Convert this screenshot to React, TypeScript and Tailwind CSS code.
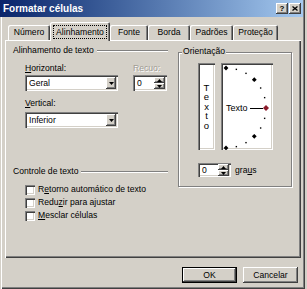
import React from "react";

const sunken =
  "shadow-[inset_1px_1px_0_#808080,inset_2px_2px_0_#404040,inset_-1px_-1px_0_#ffffff,inset_-2px_-2px_0_#d4d0c8]";
const raised =
  "shadow-[inset_-1px_-1px_0_#404040,inset_1px_1px_0_#ffffff,inset_-2px_-2px_0_#808080]";

function Down() {
  return (
    <svg width="5" height="3" viewBox="0 0 5 3">
      <path d="M0 0H5L2.5 3Z" fill="#000" />
    </svg>
  );
}
function Up() {
  return (
    <svg width="5" height="3" viewBox="0 0 5 3">
      <path d="M0 3H5L2.5 0Z" fill="#000" />
    </svg>
  );
}

function Select({ value }: { value: string }) {
  return (
    <div className={`w-[93px] h-[16px] bg-white ${sunken} flex items-center`}>
      <span className="flex-1 pl-[4px] leading-[11px]">{value}</span>
      <div className={`w-[10px] h-[12px] mr-[2px] bg-[#d4d0c8] ${raised} flex items-center justify-center`}>
        <Down />
      </div>
    </div>
  );
}

function Spin({ w, h, value }: { w: number; h: number; value: string }) {
  return (
    <div className={`bg-white ${sunken} flex items-center`} style={{ width: w, height: h }}>
      <span className="flex-1 pl-[4px] leading-[11px]">{value}</span>
      <div className="flex flex-col mr-[2px]">
        <div className={`w-[11px] h-[6px] bg-[#d4d0c8] ${raised} flex items-center justify-center`}>
          <Up />
        </div>
        <div className={`w-[11px] h-[6px] bg-[#d4d0c8] ${raised} flex items-center justify-center`}>
          <Down />
        </div>
      </div>
    </div>
  );
}

function Heading({ text }: { text: string }) {
  return (
    <div className="flex items-center h-[11px] pl-[7px]">
      <span className="leading-[11px]">{text}</span>
      <div className="flex-1 ml-[3px] h-0 border-t border-b border-t-[#808080] border-b-white" />
    </div>
  );
}

function Check({ pre, u, post }: { pre: string; u: string; post: string }) {
  return (
    <div className="flex items-center h-[13px] pl-[19px]">
      <div className={`w-[10px] h-[10px] bg-white ${sunken}`} />
      <span className="ml-[3px] leading-[11px]">
        {pre}
        <span className="underline">{u}</span>
        {post}
      </span>
    </div>
  );
}

function Tab({ label, w }: { label: string; w: number }) {
  return (
    <div
      className="h-[15px] flex items-center justify-center rounded-t-[2px] shadow-[inset_1px_1px_0_#ffffff,inset_-1px_0_0_#404040,inset_-2px_0_0_#808080]"
      style={{ width: w }}
    >
      <span className="leading-[11px]">{label}</span>
    </div>
  );
}

function Dial() {
  const cx = 5;
  const cy = 45;
  const r = 40;
  const small = [15, 30, 60, 75, -15, -30, -60, -75];
  const big = [90, 45, -45, -90];
  const pt = (a: number) => {
    const rad = (a * Math.PI) / 180;
    return [cx + r * Math.cos(rad), cy - r * Math.sin(rad)];
  };
  return (
    <div className={`relative w-[52px] h-[87px] bg-white ${sunken}`}>
      <svg className="absolute inset-0" width="52" height="87" viewBox="0 0 52 87">
        {small.map((a) => {
          const [x, y] = pt(a);
          return <rect key={a} x={x - 0.7} y={y - 0.7} width="1.4" height="1.4" fill="#000" />;
        })}
        {big.map((a) => {
          const [x, y] = pt(a);
          return (
            <path
              key={a}
              d={`M${x} ${y - 2.4}L${x + 2.4} ${y}L${x} ${y + 2.4}L${x - 2.4} ${y}Z`}
              fill="#000"
            />
          );
        })}
        <line x1="29" y1="45.5" x2="42" y2="45.5" stroke="#000" strokeWidth="1" />
        <path d="M45 42L48 45L45 48L42 45Z" fill="#8b1a2a" />
      </svg>
      <span className="absolute left-[5px] top-[40px] leading-[11px] text-[9px]">Texto</span>
    </div>
  );
}

export default function App() {
  return (
    <div className="w-[307px] h-[289px] bg-[#d4d0c8] font-['Liberation_Sans',Arial,sans-serif] text-[8.6px] text-black">
      <div className="w-[305px] h-[289px] flex flex-col shadow-[inset_1px_0_0_#d4d0c8,inset_2px_0_0_#ffffff,inset_-1px_-1px_0_#404040,inset_-2px_-2px_0_#808080]">
        {/* Title bar */}
        <div className="w-[303px] h-[17px] bg-linear-to-r from-[#0a246a] to-[#a6caf0] flex items-center">
          <span className="pl-[3px] flex-1 text-white font-bold text-[10px] leading-[12px]">
            Formatar células
          </span>
          <div className={`w-[12px] h-[11px] bg-[#d4d0c8] ${raised} flex items-center justify-center`}>
            <span className="font-bold text-[8px] leading-[8px]">?</span>
          </div>
          <div className={`ml-[1px] mr-[2px] w-[12px] h-[11px] bg-[#d4d0c8] ${raised} flex items-center justify-center`}>
            <svg width="6" height="5" viewBox="0 0 6 5">
              <path d="M0.5 0.5L5.5 4.5M5.5 0.5L0.5 4.5" stroke="#000" strokeWidth="1.3" />
            </svg>
          </div>
        </div>

        {/* Tabs */}
        <div className="mt-[5px] h-[18px] flex items-end pl-[8px]">
          <Tab label="Número" w={42} />
          <div className="relative z-10 w-[60px] h-[19px] mb-[-1px] bg-[#d4d0c8] rounded-t-[2px] shadow-[inset_1px_1px_0_#ffffff,inset_-1px_0_0_#404040,inset_-2px_0_0_#808080] pt-[3px] pl-[3px] pr-[3px]">
            <div className="h-[14px] border border-dotted border-black flex items-center justify-center">
              <span className="leading-[11px]">Alinhamento</span>
            </div>
          </div>
          <Tab label="Fonte" w={38} />
          <Tab label="Borda" w={42} />
          <Tab label="Padrões" w={43} />
          <Tab label="Proteção" w={45} />
        </div>

        {/* Panel */}
        <div className="ml-[5px] w-[296px] h-[218px] flex items-start shadow-[inset_1px_1px_0_#ffffff,inset_-1px_-1px_0_#404040,inset_-2px_-2px_0_#808080]">
          {/* Left column */}
          <div className="ml-[1px] w-[162px] flex flex-col">
            <div className="mt-[5px]">
              <Heading text="Alinhamento de texto" />
            </div>
            <div className="mt-[7px] h-[11px] flex pl-[19px]">
              <span className="w-[108px] leading-[11px]">
                <span className="underline">H</span>orizontal:
              </span>
              <span className="leading-[11px] text-[#a09c94] [text-shadow:1px_1px_0_#ffffff]">Recuo:</span>
            </div>
            <div className="mt-[1px] flex pl-[19px]">
              <Select value="Geral" />
              <div className="ml-[15px]">
                <Spin w={34} h={16} value="0" />
              </div>
            </div>
            <div className="mt-[7px] h-[11px] pl-[19px] leading-[11px]">
              <span className="underline">V</span>ertical:
            </div>
            <div className="mt-[3px] pl-[19px]">
              <Select value="Inferior" />
            </div>
            <div className="mt-[38px]">
              <Heading text="Controle de texto" />
            </div>
            <div className="mt-[6px] flex flex-col">
              <Check pre="R" u="e" post="torno automático de texto" />
              <Check pre="Redu" u="z" post="ir para ajustar" />
              <Check pre="" u="M" post="esclar células" />
            </div>
          </div>

          {/* Orientação */}
          <div className="relative mt-[12px] ml-[10px] w-[114px] h-[135px] border border-[#808080] shadow-[inset_1px_1px_0_#ffffff,1px_1px_0_#ffffff]">
            <span className="absolute left-[3px] top-[-7px] px-[1px] bg-[#d4d0c8] leading-[11px]">Orientação</span>
            <div className="mt-[10px] ml-[19px] flex">
              <div className={`w-[17px] h-[87px] bg-white ${sunken} flex flex-col items-center justify-center text-[9.5px] leading-[9.5px]`}>
                <span>T</span>
                <span>e</span>
                <span>x</span>
                <span>t</span>
                <span>o</span>
              </div>
              <div className="ml-[6px]">
                <Dial />
              </div>
            </div>
            <div className="mt-[13px] ml-[19px] flex items-center">
              <Spin w={33} h={14} value="0" />
              <span className="ml-[4px] leading-[11px]">
                gra<span className="underline">u</span>s
              </span>
            </div>
          </div>
        </div>

        {/* Buttons */}
        <div className="mt-[9px] flex justify-end pr-[7px]">
          <div className="w-[55px] h-[16px] border border-black bg-[#d4d0c8] shadow-[inset_-1px_-1px_0_#404040,inset_1px_1px_0_#ffffff,inset_-2px_-2px_0_#808080] flex items-center justify-center">
            <span className="leading-[11px]">OK</span>
          </div>
          <div className={`ml-[6px] w-[55px] h-[16px] bg-[#d4d0c8] ${raised} flex items-center justify-center`}>
            <span className="leading-[11px]">Cancelar</span>
          </div>
        </div>
      </div>
    </div>
  );
}
